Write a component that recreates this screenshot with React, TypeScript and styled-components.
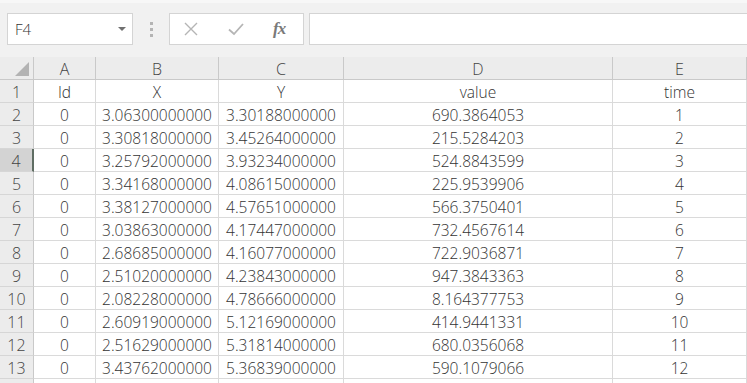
import styled, { createGlobalStyle } from 'styled-components'

const GlobalStyle = createGlobalStyle`
	html, body {
		margin: 0;
		padding: 0;
		background: #ffffff;
		overflow: hidden;
	}
	body {
		font-family: 'Open Sans', 'Liberation Sans', sans-serif;
	}
`

const rows: [string, string, string, string, string, string][] = [
	['1', 'Id', 'X', 'Y', 'value', 'time'],
	['2', '0', '3.06300000000', '3.30188000000', '690.3864053', '1'],
	['3', '0', '3.30818000000', '3.45264000000', '215.5284203', '2'],
	['4', '0', '3.25792000000', '3.93234000000', '524.8843599', '3'],
	['5', '0', '3.34168000000', '4.08615000000', '225.9539906', '4'],
	['6', '0', '3.38127000000', '4.57651000000', '566.3750401', '5'],
	['7', '0', '3.03863000000', '4.17447000000', '732.4567614', '6'],
	['8', '0', '2.68685000000', '4.16077000000', '722.9036871', '7'],
	['9', '0', '2.51020000000', '4.23843000000', '947.3843363', '8'],
	['10', '0', '2.08228000000', '4.78666000000', '8.164377753', '9'],
	['11', '0', '2.60919000000', '5.12169000000', '414.9441331', '10'],
	['12', '0', '2.51629000000', '5.31814000000', '680.0356068', '11'],
	['13', '0', '3.43762000000', '5.36839000000', '590.1079066', '12'],
	['', '', '', '', '', ''],
]

const columns = ['A', 'B', 'C', 'D', 'E']
const selectedRow = '4'

const Window = styled.div`
	width: 747px;
	height: 383px;
	overflow: hidden;
	display: flex;
	flex-direction: column;
	background: #ffffff;
`

const Toolbar = styled.div`
	display: flex;
	align-items: flex-start;
	flex-shrink: 0;
	height: 57px;
	box-sizing: border-box;
	padding: 10px 0 0 7px;
	background: #f1f1f1;
	border-top: 3px solid #f7f7f7;
`

const NameBox = styled.div`
	display: flex;
	align-items: center;
	justify-content: space-between;
	width: 126px;
	height: 32px;
	box-sizing: border-box;
	padding: 0 6px 0 7px;
	background: #ffffff;
	border: 1px solid #d4d4d4;
	font-size: 15px;
	font-weight: 300;
	color: #333333;
`

const DropArrow = styled.span`
	width: 0;
	height: 0;
	border-left: 4px solid transparent;
	border-right: 4px solid transparent;
	border-top: 4px solid #707070;
`

const Grip = styled.div`
	display: flex;
	flex-direction: column;
	gap: 3px;
	margin: 9px 16px 0 17px;
`

const GripDot = styled.span`
	width: 3px;
	height: 3px;
	background: #b4b4b4;
`

const FormulaButtons = styled.div`
	display: flex;
	align-items: center;
	width: 135px;
	height: 32px;
	box-sizing: border-box;
	padding: 0 0 0 13px;
	gap: 28px;
	background: #ffffff;
	border: 1px solid #d4d4d4;
`

const FxLabel = styled.span`
	font-family: 'Liberation Serif', 'DejaVu Serif', serif;
	font-style: italic;
	font-weight: bold;
	font-size: 17px;
	color: #7a7a7a;
	letter-spacing: -1px;
`

const FormulaInput = styled.div`
	flex: 1;
	height: 32px;
	margin-left: 5px;
	box-sizing: border-box;
	background: #ffffff;
	border: 1px solid #d4d4d4;
	border-right: none;
`

const Sheet = styled.div`
	display: grid;
	grid-template-columns: 34px 62px 123px 125px 269px 1fr;
	grid-auto-rows: 23px;
	flex-shrink: 0;
	color: #333333;
	font-size: 15.5px;
	font-weight: 300;
`

const HeaderCell = styled.div<{ $selected?: boolean }>`
	display: flex;
	align-items: center;
	justify-content: center;
	box-sizing: border-box;
	background: ${p => (p.$selected ? '#d3d3d3' : '#ececec')};
	border-right: ${p => (p.$selected ? '2px solid #5f6d63' : '1px solid #c9c9c9')};
	border-bottom: 1px solid #c9c9c9;
	color: #444444;
	font-size: 16px;
	padding-top: 1px;
`

const RowHeader = styled(HeaderCell)`
	border-bottom-color: #d6d6d6;
`

const Corner = styled(HeaderCell)`
	align-items: flex-end;
	justify-content: flex-end;
	padding: 0 4px 3px 0;
`

const Cell = styled.div`
	display: flex;
	align-items: center;
	justify-content: center;
	box-sizing: border-box;
	border-right: 1px solid #dadada;
	border-bottom: 1px solid #dadada;
	padding-top: 1px;
	white-space: nowrap;
`

export default function App() {
	return (
		<>
			<GlobalStyle />
			<Window>
				<Toolbar>
					<NameBox>
						<span>F4</span>
						<DropArrow />
					</NameBox>
					<Grip>
						<GripDot />
						<GripDot />
						<GripDot />
					</Grip>
					<FormulaButtons>
						<svg width='16' height='16' viewBox='0 0 16 16'>
							<path d='M2 2 L14 14 M14 2 L2 14' stroke='#b5b5b5' strokeWidth='1.4' fill='none' />
						</svg>
						<svg width='18' height='16' viewBox='0 0 18 16'>
							<path d='M2 8.5 L7 13 L16 3' stroke='#b5b5b5' strokeWidth='1.8' fill='none' />
						</svg>
						<FxLabel>fx</FxLabel>
					</FormulaButtons>
					<FormulaInput />
				</Toolbar>
				<Sheet>
					<Corner>
						<svg width='14' height='14' viewBox='0 0 14 14'>
							<path d='M14 0 L14 14 L0 14 Z' fill='#b3b3b3' />
						</svg>
					</Corner>
					{columns.map(c => (
						<HeaderCell key={c}>{c}</HeaderCell>
					))}
					{rows.map((r, n) => [
						<RowHeader key={n + 'h'} $selected={r[0] === selectedRow}>
							{r[0]}
						</RowHeader>,
						...r.slice(1).map((v, i) => <Cell key={n + '-' + i}>{v}</Cell>),
					])}
				</Sheet>
			</Window>
		</>
	)
}
